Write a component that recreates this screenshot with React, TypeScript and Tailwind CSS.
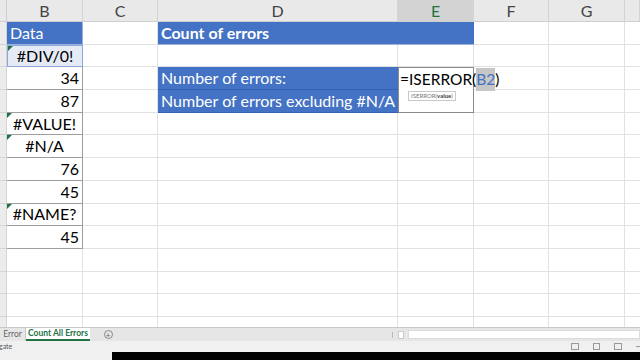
import React from "react"

const font = { fontFamily: "Lato, 'Open Sans', sans-serif" }

const cols = [
  { key: "B", w: "w-[76px]" },
  { key: "C", w: "w-[75px]" },
  { key: "D", w: "w-[240px]" },
  { key: "E", w: "w-[76px]" },
  { key: "F", w: "w-[75px]" },
  { key: "G", w: "w-[76px]" },
  { key: "H", w: "flex-1" },
]

type Cell = { text?: string; align?: "left" | "right" | "center"; err?: boolean; blue?: boolean }

const colB: Cell[] = [
  { text: "Data", align: "left", blue: true },
  { text: "#DIV/0!", align: "center", err: true },
  { text: "34", align: "right" },
  { text: "87", align: "right" },
  { text: "#VALUE!", align: "center", err: true },
  { text: "#N/A", align: "center", err: true },
  { text: "76", align: "right" },
  { text: "45", align: "right" },
  { text: "#NAME?", align: "center", err: true },
  { text: "45", align: "right" },
]

function Triangle() {
  return <span className="absolute left-0 top-0 h-0 w-0 border-t-[5px] border-r-[5px] border-t-[#1e7145] border-r-transparent" />
}

function BCell({ cell, row }: { cell?: Cell; row: number }) {
  if (!cell) return <div className="h-full w-[76px] border-r border-b border-[#e1e1e1]" />
  const align = cell.align === "right" ? "justify-end" : cell.align === "center" ? "justify-center" : "justify-start"
  let cls = "border-r border-b border-[#9e9e9e] text-black"
  if (cell.blue) cls = "bg-[#4472c4] text-white border-r border-b border-[#9db2dc]"
  if (row === 1) cls = "bg-[#e4ebf6] text-black border border-[#8ea6d8]"
  return (
    <div className={`relative flex h-full w-[76px] items-center whitespace-nowrap px-[3px] text-[16px] ${align} ${cls}`}>
      {cell.err && <Triangle />}
      {cell.text}
    </div>
  )
}

function Row({ i }: { i: number }) {
  const b = colB[i]
  return (
    <div className="flex h-[22.7px] shrink-0">
      <div className="w-[7px] border-r border-b border-[#d4d4d4] bg-[#ececec]" />
      <BCell cell={b} row={i} />
      <div className="h-full w-[75px] border-r border-b border-[#e1e1e1]" />
      {i === 0 ? (
        <div className="flex h-full w-[316px] items-center whitespace-nowrap bg-[#4472c4] px-[3px] text-[16px] font-bold text-white border-b border-[#9db2dc]">
          Count of errors
        </div>
      ) : i === 2 || i === 3 ? (
        <>
          <div className="flex h-full w-[240px] items-center whitespace-nowrap bg-[#4472c4] px-[3px] text-[16px] text-white border-b border-[#3461b0]">
            {i === 2 ? "Number of errors:" : "Number of errors excluding #N/A"}
          </div>
          {i === 2 ? (
            <div className="relative z-10 flex h-full w-[76px] items-center whitespace-nowrap border-l border-r border-t border-[#8a8a8a] bg-white pl-[1px] text-[15.5px] text-black">
              =ISERROR(<span className="bg-[#c6c6c6] text-[#4472c4]">B2</span>)
              <div className="absolute left-[9px] top-[23px] border border-[#c8c8c8] bg-white px-[2px] text-[6px] leading-[8px] text-[#777]">
                ISERROR(<b className="text-[#444]">value</b>)
              </div>
            </div>
          ) : (
            <div className="h-full w-[76px] border-l border-r border-b border-[#8a8a8a] bg-white" />
          )}
        </>
      ) : (
        <>
          <div className="h-full w-[240px] border-r border-b border-[#e1e1e1]" />
          <div className="h-full w-[76px] border-r border-b border-[#e1e1e1]" />
        </>
      )}
      <div className="h-full w-[75px] border-r border-b border-[#e1e1e1]" />
      <div className="h-full w-[76px] border-r border-b border-[#e1e1e1]" />
      <div className="h-full flex-1 border-b border-[#e1e1e1]" />
    </div>
  )
}

export default function App() {
  return (
    <div className="flex h-[360px] w-[640px] flex-col overflow-hidden bg-white" style={font}>
      {/* column headers */}
      <div className="flex h-[22px] shrink-0 bg-[#e9e9e9] border-b border-[#cfcfcf]">
        <div className="w-[7px] border-r border-[#cfcfcf]" />
        {cols.map((c) => (
          <div
            key={c.key}
            className={`${c.w} flex items-center justify-center border-r border-[#d4d4d4] text-[16px] ${
              c.key === "E" ? "bg-[#d3d3d3] text-[#217346]" : "text-[#444]"
            }`}
          >
            {c.key !== "H" && c.key}
          </div>
        ))}
      </div>

      {/* grid */}
      <div className="flex flex-1 flex-col overflow-hidden">
        {Array.from({ length: 14 }).map((_, i) => (
          <Row key={i} i={i} />
        ))}
      </div>

      {/* sheet tabs */}
      <div className="flex h-[14px] shrink-0 items-stretch bg-[#e6e6e6] border-t border-[#c8c8c8] text-[8.5px]">
        <div className="flex w-[26px] items-center justify-center text-[#666] border-r border-[#c8c8c8]">Error</div>
        <div className="flex w-[64px] flex-col items-center justify-center whitespace-nowrap bg-white font-bold text-[#217346] border-b-2 border-[#217346]">
          Count All Errors
        </div>
        <div className="flex w-[36px] items-center justify-center">
          <span className="flex h-[9px] w-[9px] items-center justify-center rounded-full border border-[#888] text-[8px] leading-none text-[#666]">+</span>
        </div>
        <div className="flex-1" />
        <div className="flex w-[20px] items-center justify-center gap-[1px] text-[#999]">
          <span className="h-[6px] w-[1px] bg-[#bbb]" />
          <span className="ml-[4px] h-[8px] w-[6px] border border-[#ccc] bg-white" />
        </div>
        <div className="my-[2px] w-[232px] bg-white border border-[#dcdcdc]" />
      </div>

      {/* status bar */}
      <div className="flex h-[11px] shrink-0 items-center bg-[#f0f0f0] text-[7px] text-[#555]">
        <span className="-ml-[1px]">gate</span>
        <div className="flex-1" />
        <div className="flex items-center gap-[14px] pr-0">
          <span className="h-[7px] w-[8px] border border-[#999] bg-[linear-gradient(90deg,transparent_45%,#999_45%,#999_55%,transparent_55%)]" />
          <span className="h-[7px] w-[7px] border border-[#999]" />
          <span className="h-[7px] w-[8px] border border-[#999]" />
          <span className="h-[1px] w-[4px] bg-[#999]" />
        </div>
      </div>

      {/* bottom edge */}
      <div className="flex h-[8px] shrink-0">
        <div className="w-[112px] bg-[#f0f0f0]" />
        <div className="flex-1 bg-black" />
      </div>
    </div>
  )
}
